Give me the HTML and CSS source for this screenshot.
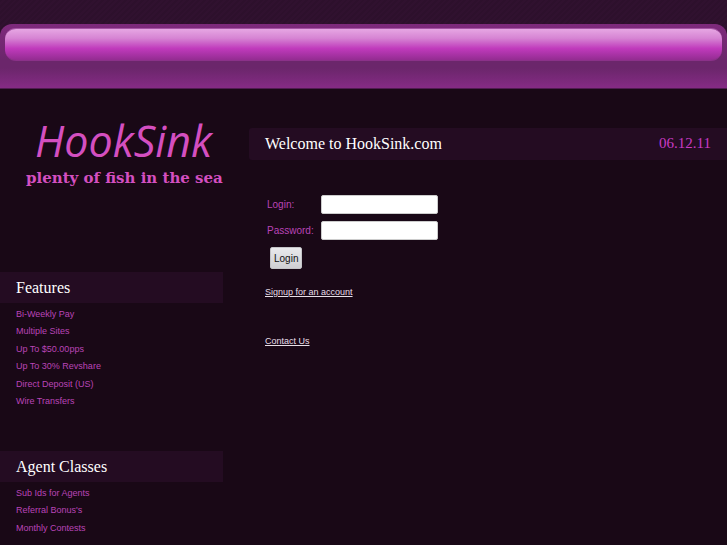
FILE: index.html
```
<!DOCTYPE html>
<html lang="en">
<head>
  <meta charset="UTF-8" />
  <meta name="viewport" content="width=device-width, initial-scale=1.0"/>
  <title>HookSink.com</title>
  <link rel="stylesheet" href="styles.css">
</head>
<body>
  <header class="top">
    <div class="panel">
      <div class="navbar"></div>
    </div>
  </header>

  <div class="page">
    <aside class="sidebar">
      <div class="logo">
        <div class="logo-name">HookSink</div>
        <div class="logo-tagline">plenty of fish in the sea</div>
      </div>

      <section class="box">
        <h2>Features</h2>
        <ul>
          <li>Bi-Weekly Pay</li>
          <li>Multiple Sites</li>
          <li>Up To $50.00pps</li>
          <li>Up To 30% Revshare</li>
          <li>Direct Deposit (US)</li>
          <li>Wire Transfers</li>
        </ul>
      </section>

      <section class="box">
        <h2>Agent Classes</h2>
        <ul>
          <li>Sub Ids for Agents</li>
          <li>Referral Bonus's</li>
          <li>Monthly Contests</li>
        </ul>
      </section>
    </aside>

    <main class="content">
      <div class="title">
        <h1>Welcome to HookSink.com</h1>
        <span class="date">06.12.11</span>
      </div>

      <form class="login">
        <label for="login">Login:</label>
        <input type="text" id="login" name="login">
        <label for="password">Password:</label>
        <input type="password" id="password" name="password">
        <button type="submit">Login</button>
      </form>

      <div class="links">
        <a href="#signup">Signup for an account</a>
        <a href="#contact">Contact Us</a>
      </div>
    </main>
  </div>
</body>
</html>
```

FILE: styles.css
```
* {
  box-sizing: border-box;
}

body {
  margin: 0;
  background: #190816;
  color: #b944b6;
  font-family: "Liberation Sans", Arial, sans-serif;
  font-size: 9px;
}

h1, h2 {
  margin: 0;
  color: #fff;
  font-family: "Liberation Serif", "Times New Roman", serif;
  font-size: 16px;
  font-weight: normal;
}

/* Header */
.top {
  padding-top: 24px;
  background: repeating-linear-gradient(135deg, #2d102c 0 2px, #30112f 2px 4px);
}

.panel {
  height: 65px;
  padding: 4px 5px;
  border-bottom: 1px solid #4f1c50;
  border-radius: 12px 12px 0 0;
  background: linear-gradient(#7e2a7c 0, #6b266b 36px, #6b266b 44px, #852b85 64px);
}

.navbar {
  height: 33px;
  border-top: 1px solid #a552a4;
  border-bottom: 1px solid #8b3189;
  border-radius: 11px;
  background: linear-gradient(#e6a6e3 0, #d684d3 30%, #c03abc 63%, #932c91 100%);
}

/* Columns */
.page {
  display: flex;
  gap: 26px;
  height: calc(100vh - 89px);
  overflow: hidden;
}

.sidebar {
  flex: 0 0 223px;
}

.content {
  flex: 1;
  padding-top: 39px;
}

/* Logo */
.logo {
  height: 183px;
  padding-top: 23px;
  color: #d44fc0;
  white-space: nowrap;
}

.logo-name {
  padding-left: 35px;
  font-family: "Open Sans", sans-serif;
  font-size: 43px;
  font-style: italic;
  line-height: 58px;
}

.logo-tagline {
  padding-left: 26px;
  font-family: "DejaVu Serif", serif;
  font-size: 15px;
  font-weight: bold;
  line-height: 17px;
}

/* Sidebar boxes */
.box {
  margin-bottom: 41px;
}

.box h2 {
  padding-left: 16px;
  background: #240c22;
  line-height: 31px;
}

.box ul {
  margin: 0;
  padding: 3px 0 0 16px;
  list-style: none;
}

.box li {
  line-height: 17px;
}

.box li:nth-child(even) {
  margin-bottom: 1px;
}

/* Main column */
.title {
  display: flex;
  justify-content: space-between;
  padding: 0 16px;
  border-radius: 3px 0 0 3px;
  background: #240c22;
  line-height: 32px;
}

.date {
  color: #c93bc5;
  font-family: "Liberation Serif", "Times New Roman", serif;
  font-size: 15px;
  line-height: 30px;
}

.login {
  display: grid;
  grid-template-columns: 54px 117px;
  row-gap: 7px;
  align-items: center;
  margin: 35px 0 0 18px;
  font-size: 10px;
}

.login input {
  width: 100%;
  height: 19px;
  padding: 1px 3px;
  border: 1px solid #ccc;
  border-radius: 2px;
  background: #fff;
}

.login button {
  justify-self: start;
  height: 22px;
  margin-left: 3px;
  padding: 0 3px;
  border: 1px solid #c4c4c8;
  border-radius: 2px;
  background: linear-gradient(#e9e9ec, #cfcfd3);
  color: #111;
  font-family: inherit;
  font-size: 10px;
}

.links {
  display: flex;
  flex-direction: column;
  align-items: flex-start;
  gap: 37px;
  margin: 17px 0 0 16px;
  line-height: 12px;
}

.links a {
  color: #e8dfe8;
}
```
